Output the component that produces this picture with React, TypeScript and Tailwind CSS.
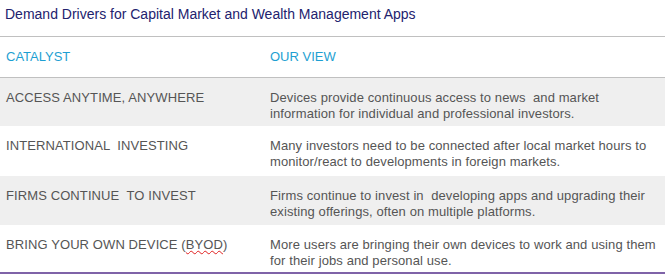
export default function App() {
  const rows = [
    {
      c: "ACCESS ANYTIME, ANYWHERE",
      v: ["Devices provide continuous access to news  and market", "information for individual and professional investors."],
      gray: true,
      h: "h-[48px]",
    },
    {
      c: "INTERNATIONAL  INVESTING",
      v: ["Many investors need to be connected after local market hours to", "monitor/react to developments in foreign markets."],
      gray: false,
      h: "h-[50px]",
    },
    {
      c: "FIRMS CONTINUE  TO INVEST",
      v: ["Firms continue to invest in  developing apps and upgrading their", "existing offerings, often on multiple platforms."],
      gray: true,
      h: "h-[49px]",
    },
    {
      c: "BRING YOUR OWN DEVICE (BYOD)",
      v: ["More users are bringing their own devices to work and using them", "for their jobs and personal use."],
      gray: false,
      h: "h-[47px]",
    },
  ];
  return (
    <div className="w-[665px] h-[275px] bg-white overflow-hidden" style={{ fontFamily: '"Liberation Sans", Arial, sans-serif' }}>
      <div className="h-[36px] pl-[5px] pt-[6px] text-[14px] leading-[16px] text-[#22226e]">
        Demand Drivers for Capital Market and Wealth Management Apps
      </div>
      <div className="border-t border-b border-[#c0c0c0] h-[42px] flex items-center text-[13px] leading-[16px] text-[#1e9fd2]">
        <div className="w-[270px] pl-[6px]">CATALYST</div>
        <div>OUR VIEW</div>
      </div>
      {rows.map((r, i) => (
        <div key={i} className={`${r.h} flex pt-[12px] text-[13px] leading-[16px] text-[#555555] ${r.gray ? "bg-[#efefef]" : "bg-white"}`}>
          <div className="w-[270px] pl-[6px] whitespace-pre tracking-[0.1px]">
            {r.c === "BRING YOUR OWN DEVICE (BYOD)" ? (
              <>
                BRING YOUR OWN DEVICE (<span className="underline decoration-wavy decoration-[#e02020] decoration-1">BYOD</span>)
              </>
            ) : (
              r.c
            )}
          </div>
          <div className="whitespace-pre tracking-[0.1px]">
            {r.v.map((l, j) => (
              <div key={j}>{l}</div>
            ))}
          </div>
        </div>
      ))}
      <div className="h-[2px] bg-[#7f63a8]" />
    </div>
  );
}
